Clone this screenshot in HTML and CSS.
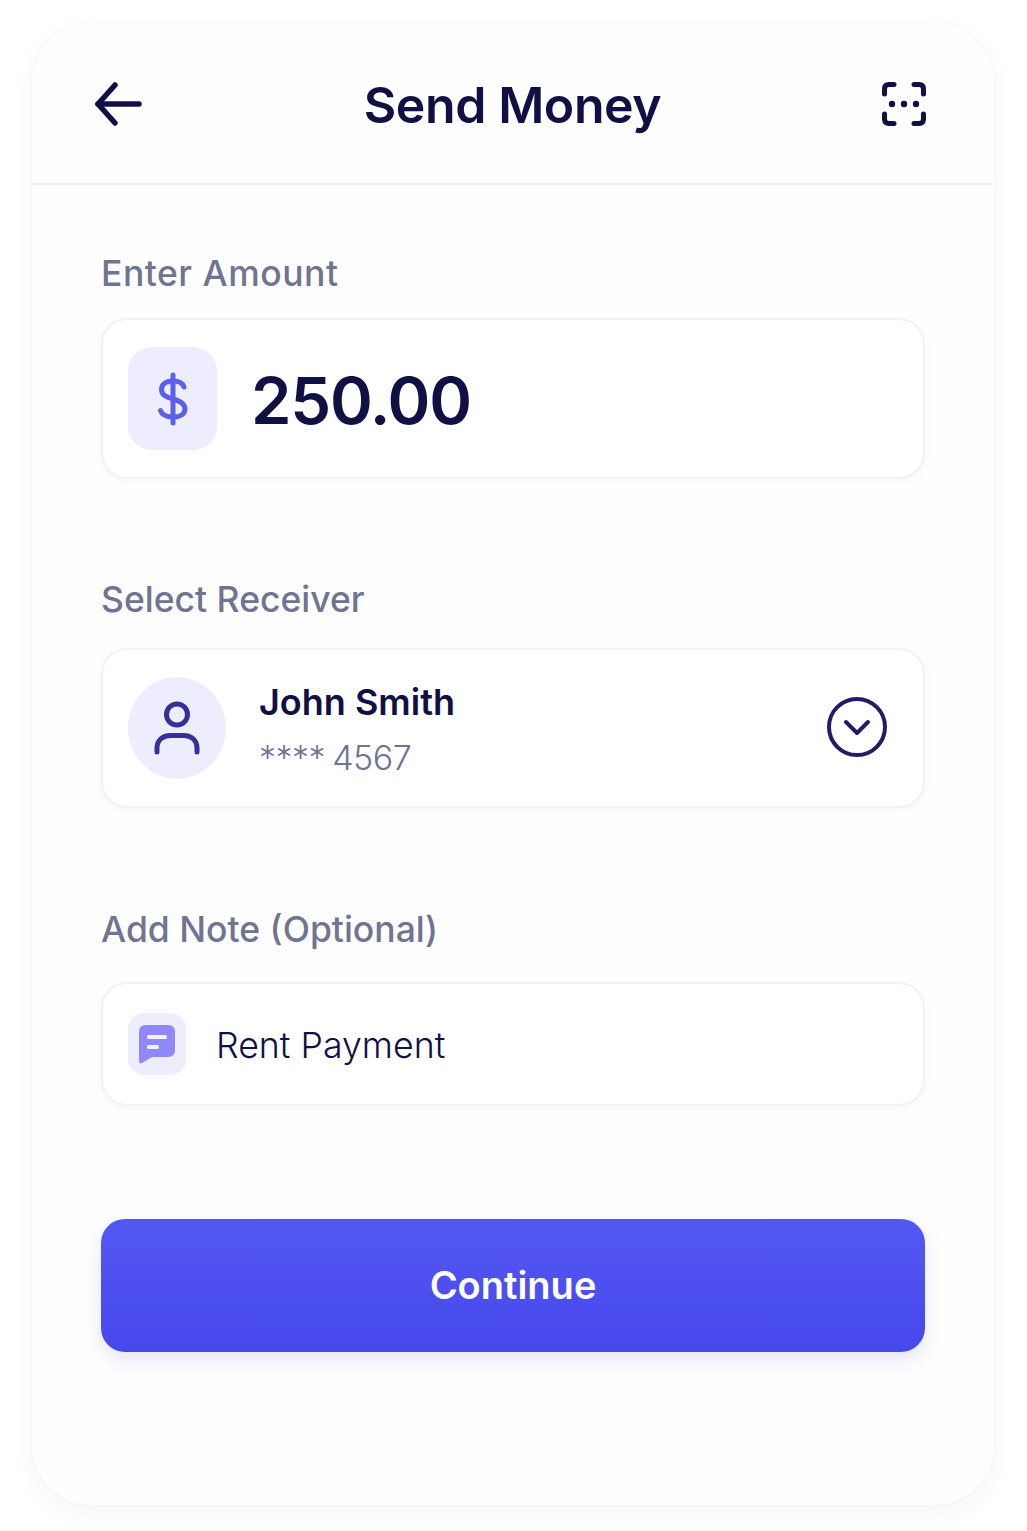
FILE: index.html
```html
<!DOCTYPE html>
<html lang="en">
<head>
    <meta charset="UTF-8">
    <meta name="viewport" content="width=device-width, initial-scale=1.0">
    <title>Send Money</title>
    <link rel="stylesheet" href="styles.css">
</head>
<body>
    <div class="phone-card">
        <div class="top-bar">
            <svg class="back-icon" xmlns="http://www.w3.org/2000/svg" width="47" height="44" viewBox="0 0 47 44" fill="none" stroke="currentColor" stroke-width="5.5" stroke-linecap="round" stroke-linejoin="round">
                <line x1="3" y1="22" x2="44" y2="22"></line>
                <polyline points="20 3 3 22 20 41"></polyline>
            </svg>
            <h1>Send Money</h1>
            <svg class="scan-icon" xmlns="http://www.w3.org/2000/svg" width="44" height="44" viewBox="0 0 44 44" fill="none" stroke="currentColor" stroke-width="5" stroke-linecap="round" stroke-linejoin="round">
                <path d="M2.5 12 V7 Q2.5 2.5 7 2.5 H12"></path>
                <path d="M32 2.5 H37 Q41.5 2.5 41.5 7 V12"></path>
                <path d="M2.5 32 V37 Q2.5 41.5 7 41.5 H12"></path>
                <path d="M32 41.5 H37 Q41.5 41.5 41.5 37 V32"></path>
                <circle cx="10" cy="22" r="3.2" fill="currentColor" stroke="none"></circle>
                <circle cx="22" cy="22" r="3.2" fill="currentColor" stroke="none"></circle>
                <circle cx="34" cy="22" r="3.2" fill="currentColor" stroke="none"></circle>
            </svg>
        </div>

        <div class="form-body">
            <div class="field amount-field">
                <div class="field-label wide">Enter Amount</div>
                <div class="field-box amount-box">
                    <div class="dollar-badge">
                        <svg xmlns="http://www.w3.org/2000/svg" width="32" height="54" viewBox="0 0 32 54" fill="none" stroke="currentColor" stroke-width="5" stroke-linecap="round" stroke-linejoin="round">
                            <line x1="16" y1="3" x2="16" y2="51"></line>
                            <path d="M27 15 C25.5 10.5 22 9 16 9 C9 9 4.5 12 4.5 17.5 C4.5 23 9 25 16 27 C23 29 28 31.5 28 37 C28 42 23 45 16 45 C9.5 45 5 43 3.5 38.5"></path>
                        </svg>
                    </div>
                    <div class="amount-value">250.00</div>
                </div>
            </div>

            <div class="field receiver-field">
                <div class="field-label">Select Receiver</div>
                <div class="field-box receiver-box">
                    <div class="avatar">
                        <svg xmlns="http://www.w3.org/2000/svg" width="46" height="54" viewBox="0 0 46 54" fill="none" stroke="currentColor" stroke-width="5" stroke-linecap="round" stroke-linejoin="round">
                            <circle cx="23" cy="13.5" r="10.5"></circle>
                            <path d="M3 51 V47 C3 39 9 34.5 16 34.5 H30 C37 34.5 43 39 43 47 V51"></path>
                        </svg>
                    </div>
                    <div class="receiver-info">
                        <div class="receiver-name">John Smith</div>
                        <div class="receiver-account">**** 4567</div>
                    </div>
                    <svg class="chevron-icon" xmlns="http://www.w3.org/2000/svg" width="60" height="60" viewBox="0 0 60 60" fill="none" stroke="currentColor" stroke-width="4" stroke-linecap="round" stroke-linejoin="round">
                        <circle cx="30" cy="30" r="28"></circle>
                        <polyline points="19 25 30 36 41 25"></polyline>
                    </svg>
                </div>
            </div>

            <div class="field note-field">
                <div class="field-label">Add Note (Optional)</div>
                <div class="field-box note-box">
                    <div class="note-badge">
                        <svg xmlns="http://www.w3.org/2000/svg" width="36" height="39" viewBox="0 0 36 39">
                            <path fill="#8f88f6" d="M7 0 H29 Q36 0 36 7 V25 Q36 32 29 32 H13 L3 38 Q0 39.5 0 36 V7 Q0 0 7 0 Z"></path>
                            <rect x="8" y="10" width="20" height="4" rx="1.5" fill="#f1f0ff"></rect>
                            <rect x="8" y="20" width="12" height="4" rx="1.5" fill="#f1f0ff"></rect>
                        </svg>
                    </div>
                    <div class="note-text">Rent Payment</div>
                </div>
            </div>

            <button class="continue-btn">Continue</button>
        </div>
    </div>
</body>
</html>
```

FILE: styles.css
```css
:root {
    --navy: #101045;
    --muted: #6f7492;
    --primary: #4c4ff0;
    --tint: #eeedfd;
    --line: #f0f0f6;
}

* {
    margin: 0;
    padding: 0;
    box-sizing: border-box;
}

body {
    font-family: 'Inter', sans-serif;
    background-color: #ffffff;
    padding: 23px 33px 26px 32px;
    height: 1531px;
    overflow: hidden;
}

.phone-card {
    height: 1482px;
    background-color: #fefefe;
    border-radius: 60px;
    box-shadow: 0 8px 24px rgba(40, 40, 90, 0.045), 0 0 4px rgba(40, 40, 90, 0.03);
}

.top-bar {
    height: 162px;
    padding: 2px 68px 0 63px;
    display: flex;
    justify-content: space-between;
    align-items: center;
    border-bottom: 2px solid var(--line);
    color: var(--navy);
}

.top-bar h1 {
    font-size: 50px;
    font-weight: 600;
    letter-spacing: -0.4px;
    line-height: 1;
    margin-top: 2px;
    margin-left: 1px;
}

.form-body {
    padding: 67px 69px 0;
}

.field-label {
    font-size: 35.5px;
    font-weight: 500;
    line-height: 44px;
    color: var(--muted);
}

.field-label.wide {
    letter-spacing: 0.5px;
}

.field-box {
    display: flex;
    align-items: center;
    background-color: #ffffff;
    border: 2px solid #f1f1f6;
    border-radius: 26px;
    padding-left: 25px;
    box-shadow: 0 2px 6px rgba(40, 40, 90, 0.04);
}

.amount-field {
    margin-bottom: 99px;
}

.amount-field .field-label {
    margin-bottom: 22px;
}

.amount-box {
    height: 161px;
    gap: 34px;
}

.dollar-badge {
    width: 89px;
    height: 103px;
    border-radius: 24px;
    background-color: var(--tint);
    color: #5b60ec;
    display: flex;
    align-items: center;
    justify-content: center;
}

.amount-value {
    font-size: 65px;
    font-weight: 600;
    letter-spacing: -1.2px;
    color: var(--navy);
    padding-top: 3px;
}

.receiver-field {
    margin-bottom: 100px;
}

.receiver-field .field-label {
    margin-bottom: 26px;
}

.receiver-box {
    height: 160px;
    gap: 33px;
    padding-right: 36px;
}

.avatar {
    width: 98px;
    height: 102px;
    border-radius: 50%;
    background-color: var(--tint);
    color: #35309a;
    display: flex;
    align-items: center;
    justify-content: center;
}

.receiver-info {
    flex-grow: 1;
    padding-top: 4px;
}

.receiver-name {
    font-size: 36px;
    font-weight: 600;
    line-height: 44px;
    color: var(--navy);
}

.receiver-account {
    font-size: 34px;
    font-weight: 300;
    letter-spacing: -0.5px;
    word-spacing: -2px;
    line-height: 44px;
    margin-top: 12px;
    color: var(--muted);
}

.chevron-icon {
    color: #241a66;
    margin-top: -2px;
}

.note-field {
    margin-bottom: 113px;
}

.note-field .field-label {
    margin-bottom: 30px;
}

.note-box {
    height: 124px;
    gap: 30px;
}

.note-badge {
    width: 58px;
    height: 62px;
    border-radius: 16px;
    background-color: var(--tint);
    display: flex;
    align-items: center;
    justify-content: center;
}

.note-text {
    font-size: 35.7px;
    font-weight: 300;
    color: var(--navy);
    padding-top: 1px;
}

.continue-btn {
    display: block;
    width: 100%;
    height: 133px;
    border: none;
    border-radius: 24px;
    background: linear-gradient(to bottom, #5458f2, #4648ec);
    color: #ffffff;
    font-family: 'Inter', sans-serif;
    font-size: 38px;
    font-weight: 600;
    padding-bottom: 2px;
    box-shadow: 0 8px 18px rgba(76, 79, 240, 0.14);
    cursor: pointer;
}
```
